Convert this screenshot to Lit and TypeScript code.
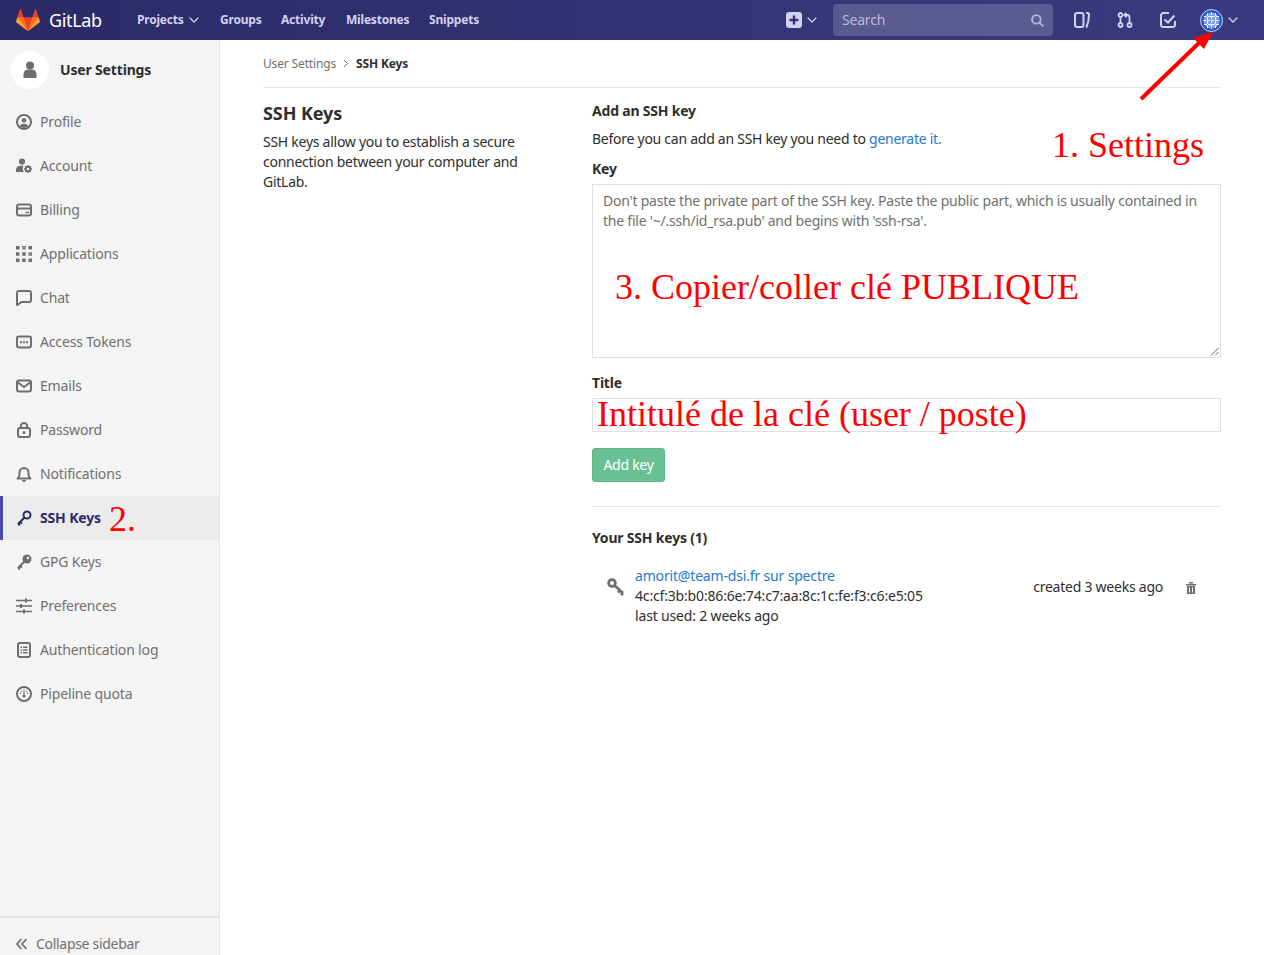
import { LitElement, css, html, svg } from 'lit'
import { customElement } from 'lit/decorators.js'

const chevron = html`<svg class="caret" viewBox="0 0 10 6"><path d="M1 1l4 4 4-4" fill="none" stroke="currentColor" stroke-width="1.2" stroke-linecap="round" stroke-linejoin="round"/></svg>`

const sideIcons: Record<string, unknown> = {
  profile: svg`<circle cx="8" cy="8" r="7" fill="none" stroke="currentColor" stroke-width="2"/><circle cx="8" cy="6.2" r="2.3" fill="currentColor"/><path d="M3.8 12.2c.8-1.7 2.3-2.4 4.2-2.4s3.400.7 4.200 2.400c-1 1-2.600 1.600-4.200 1.600s-3.200-.6-4.200-1.600z" fill="currentColor"/>`,
  account: svg`<circle cx="6" cy="3.6" r="3.1" fill="currentColor"/><path d="M0 14v-2.500C0 9.300 2 7.800 4.500 7.800h3c-1 1.700-1 4.300.4 6.200z" fill="currentColor"/><circle cx="12" cy="11" r="2.300" fill="none" stroke="currentColor" stroke-width="2"/><path d="M12 7v1.200M12 13.800V15M8 11h1.200M14.800 11H16M9.200 8.200l.8.800M14 13l.8.800M14.800 8.200l-.8.800M10 13l-.8.800" stroke="currentColor" stroke-width="1.500"/>`,
  billing: svg`<rect x="1" y="2.500" width="14" height="11" rx="2" fill="none" stroke="currentColor" stroke-width="2"/><path d="M1 5.500h14v2H1z" fill="currentColor"/><path d="M9.500 10.500h3.500" stroke="currentColor" stroke-width="1.500"/>`,
  applications: svg`<path d="M0 0h3.500v3.500H0zM12.500 0H16v3.500h-3.500zM0 6.200h3.500v3.500H0zM6.200 6.200h3.500v3.500H6.200zM0 12.500h3.500V16H0zM6.200 12.500h3.500V16H6.200zM12.500 12.500H16V16h-3.500z" fill="currentColor"/><path d="M6.800.6h2.400V3H6.800zM13.100 6.800h2.400v2.400h-2.400z" fill="none" stroke="currentColor" stroke-width="1.200"/>`,
  chat: svg`<path d="M3 1h10a2 2 0 0 1 2 2v7a2 2 0 0 1-2 2H5.500L1.500 15 1 15V3a2 2 0 0 1 2-2z" fill="none" stroke="currentColor" stroke-width="2" stroke-linejoin="round"/>`,
  tokens: svg`<rect x="1" y="2.500" width="14" height="11" rx="2" fill="none" stroke="currentColor" stroke-width="2"/><path d="M4 7.200h2v2H4zM7 7.200h2v2H7zM10 7.200h2v2h-2z" fill="currentColor"/>`,
  emails: svg`<rect x="1" y="2.500" width="14" height="11" rx="2" fill="none" stroke="currentColor" stroke-width="2"/><path d="M2 4.500l6 4.500 6-4.500" fill="none" stroke="currentColor" stroke-width="2"/>`,
  password: svg`<rect x="2" y="6" width="12" height="9" rx="2" fill="none" stroke="currentColor" stroke-width="2"/><path d="M4.800 6V4.200a3.200 3.200 0 0 1 6.400 0V6" fill="none" stroke="currentColor" stroke-width="2"/><circle cx="8" cy="10.500" r="1.500" fill="currentColor"/>`,
  bell: svg`<path d="M1.500 12.500c1.300-1 2-2 2-3.500V6.500a4.500 4.500 0 0 1 9 0V9c0 1.500.7 2.500 2 3.500z" fill="none" stroke="currentColor" stroke-width="2" stroke-linejoin="round"/><path d="M6 14a2 2 0 0 0 4 0z" fill="currentColor"/><path d="M7 1h2v2H7z" fill="currentColor"/>`,
  key: svg`<circle cx="11" cy="5" r="3.500" fill="none" stroke="currentColor" stroke-width="2"/><path d="M8.500 7.500L2 14M2 14l2 1M4 11.800l2 2" fill="none" stroke="currentColor" stroke-width="2"/>`,
  gpg: svg`<circle cx="11" cy="5" r="4.500" fill="currentColor"/><circle cx="12" cy="4" r="1.200" fill="#f4f4f4"/><path d="M8.500 7.500L2 14M2 14l2 1M4 11.800l2 2" fill="none" stroke="currentColor" stroke-width="2"/>`,
  preferences: svg`<path d="M0 2.500h16M0 8h16M0 13.500h16" stroke="currentColor" stroke-width="1.500"/><path d="M9 .5h2v4H9zM4 6h2v4H4zM7 11.500h2v4H7z" fill="currentColor"/>`,
  log: svg`<rect x="2" y="1" width="12" height="14" rx="2" fill="none" stroke="currentColor" stroke-width="2"/><path d="M4.500 4.500h1.500V6H4.500zM7 4.500h4.500V6H7zM4.500 7.300h1.500v1.500H4.500zM7 7.300h4.500v1.500H7zM4.500 10h1.500v1.500H4.500zM7 10h4.500v1.500H7z" fill="currentColor"/>`,
  quota: svg`<circle cx="8" cy="8" r="7" fill="none" stroke="currentColor" stroke-width="2"/><circle cx="8" cy="10" r="1.600" fill="currentColor"/><path d="M8 9V5.500" stroke="currentColor" stroke-width="1.200"/><path d="M8 3.200v1.300M3.800 7.500h1.300M10.900 7.500h1.300M5 5l.9.900M11 5l-.9.900" stroke="currentColor" stroke-width="1.200"/>`,
}

const menu = [
  ['profile', 'Profile'],
  ['account', 'Account'],
  ['billing', 'Billing'],
  ['applications', 'Applications'],
  ['chat', 'Chat'],
  ['tokens', 'Access Tokens'],
  ['emails', 'Emails'],
  ['password', 'Password'],
  ['bell', 'Notifications'],
  ['key', 'SSH Keys'],
  ['gpg', 'GPG Keys'],
  ['preferences', 'Preferences'],
  ['log', 'Authentication log'],
  ['quota', 'Pipeline quota'],
]

@customElement('app-root')
export class AppRoot extends LitElement {
  static styles = css`
    :host {
      display: block;
      position: relative;
      height: 955px;
      overflow: hidden;
      font-family: 'Noto Sans', sans-serif;
      font-size: 14px;
      line-height: 20px;
      color: #2e2e2e;
      background: #fff;
    }

    * {
      box-sizing: border-box;
    }

    .navbar {
      display: flex;
      align-items: center;
      height: 40px;
      padding-left: 16px;
      background: linear-gradient(90deg, #2b2a66, #3b3a80);
      color: #d1d1f0;
    }

    .brand {
      display: flex;
      align-items: center;
      gap: 9px;
      width: 121px;
      color: #fff;
      font-size: 18px;
      letter-spacing: -0.35px;
    }

    .brand svg {
      width: 24px;
      height: 24px;
    }

    .links {
      display: flex;
      width: 649px;
      font-size: 12px;
      font-weight: 700;
      letter-spacing: -0.2px;
    }

    .links span {
      display: flex;
      align-items: center;
      gap: 5px;
    }

    .links span:nth-child(1) {
      width: 83px;
    }
    .links span:nth-child(2) {
      width: 61px;
    }
    .links span:nth-child(3) {
      width: 65px;
    }
    .links span:nth-child(4) {
      width: 83px;
    }

    .caret {
      width: 10px;
      height: 6px;
      flex: none;
    }

    .new {
      display: flex;
      align-items: center;
      gap: 5px;
      width: 47px;
    }

    .new svg:first-child {
      width: 16px;
      height: 16px;
    }

    .search {
      display: flex;
      align-items: center;
      justify-content: space-between;
      width: 220px;
      height: 32px;
      padding: 0 9px;
      border-radius: 4px;
      background: rgba(255, 255, 255, 0.18);
      color: #b9b9dc;
      letter-spacing: -0.2px;
    }

    .search svg {
      width: 13px;
      height: 13px;
    }

    .tools {
      display: flex;
      align-items: center;
      margin-left: 21px;
    }

    .tools .tool {
      width: 16px;
      height: 16px;
      margin-right: 27px;
    }

    .avatar {
      width: 23px;
      height: 23px;
      margin: 0 5px 0 -3px;
    }

    .layout {
      display: flex;
      height: 915px;
    }

    .sidebar {
      display: flex;
      flex-direction: column;
      width: 220px;
      flex: none;
      background: #f4f4f4;
      border-right: 1px solid #e5e5e5;
      color: #707070;
      letter-spacing: -0.16px;
    }

    .context {
      display: flex;
      align-items: center;
      gap: 11px;
      height: 60px;
      padding-left: 11px;
      font-weight: 700;
      color: #2e2e2e;
    }

    .context i {
      display: flex;
      align-items: center;
      justify-content: center;
      width: 38px;
      height: 38px;
      border-radius: 50%;
      background: #fff;
      color: #6e6e6e;
    }

    .context svg {
      width: 16px;
      height: 18px;
    }

    .items {
      flex: 1;
    }

    .item {
      display: flex;
      align-items: center;
      gap: 8px;
      height: 44px;
      padding-left: 16px;
    }

    .item svg {
      width: 16px;
      height: 16px;
      flex: none;
      color: #6e6e6e;
    }

    .item.active {
      padding-left: 13px;
      border-left: 3px solid #4b4ba3;
      background: #ebebeb;
      color: #2d2b69;
      font-weight: 700;
    }

    .item.active svg {
      color: #2d2b69;
    }

    .step {
      margin: 2px 0 0 0;
      font: 36px/1 'Liberation Serif', serif;
      letter-spacing: 0;
      color: #f00;
    }

    .collapse {
      display: flex;
      align-items: center;
      gap: 8px;
      height: 39px;
      padding: 14px 0 0 16px;
      border-top: 2px solid #e5e5e5;
      letter-spacing: -0.3px;
    }

    .collapse svg {
      width: 12px;
      height: 12px;
    }

    .content {
      flex: 1;
      padding: 0 43px;
    }

    .crumbs {
      display: flex;
      align-items: center;
      gap: 7px;
      height: 48px;
      border-bottom: 1px solid #e5e5e5;
      font-size: 12px;
      letter-spacing: -0.15px;
      color: #707070;
    }

    .crumbs svg {
      width: 6px;
      height: 9px;
    }

    .crumbs b {
      color: #2e2e2e;
    }

    .row {
      display: grid;
      grid-template-columns: 329px 1fr;
      letter-spacing: -0.26px;
    }

    .intro h4 {
      margin: 13px 0 7px;
      font-size: 18px;
      line-height: 24px;
      font-weight: 700;
      letter-spacing: -0.1px;
    }

    .intro p {
      width: 270px;
      margin: 0;
    }

    .label {
      display: block;
      font-weight: 700;
      letter-spacing: -0.2px;
    }

    .add {
      padding-top: 13px;
    }

    .add p {
      margin: 8px 0 10px;
    }

    a {
      color: #1f78d1;
      text-decoration: none;
    }

    .keybox {
      position: relative;
      height: 174px;
      margin: 5px 0 15px;
      padding: 6px 10px;
      border: 1px solid #dfdfdf;
      color: #707070;
      letter-spacing: -0.225px;
    }

    .keybox .note {
      position: absolute;
      left: 22px;
      top: 80px;
    }

    .note {
      font: 36px/44px 'Liberation Serif', serif;
      letter-spacing: 0;
      color: #f00;
      white-space: nowrap;
    }

    .grip {
      position: absolute;
      right: 1px;
      bottom: 1px;
      width: 9px;
      height: 9px;
    }

    .titlebox {
      height: 34px;
      margin: 5px 0 16px;
      padding-left: 4px;
      border: 1px solid #dfdfdf;
    }

    .titlebox .note {
      line-height: 30px;
    }

    .btn {
      display: flex;
      align-items: center;
      justify-content: center;
      width: 73px;
      height: 34px;
      border: 1px solid #5fb68a;
      border-radius: 3px;
      background: #69c193;
      color: #fff;
    }

    hr {
      height: 1px;
      margin: 24px 0 21px;
      border: 0;
      background: #e5e5e5;
    }

    .keyrow {
      display: flex;
      align-items: flex-start;
      padding: 18px 0 0 15px;
      letter-spacing: -0.17px;
    }

    .keyrow .bigkey {
      width: 18px;
      height: 18px;
      margin: 12px 10px 0 0;
      color: #707070;
    }

    .keyinfo {
      flex: 1;
    }

    .created {
      margin-top: 2px;
      padding-top: 9px;
      letter-spacing: -0.24px;
    }

    .trash {
      width: 12px;
      height: 13px;
      margin: 15px 24px 0 22px;
      color: #707070;
    }

    .settings {
      position: absolute;
      left: 1052px;
      top: 123px;
    }

    .arrow {
      position: absolute;
      left: 1130px;
      top: 25px;
      width: 95px;
      height: 80px;
    }
  `

  render() {
    return html`
      <div class="navbar">
        <div class="brand">
          <svg viewBox="0 0 36 36">
            <path fill="#e24329" d="M2 14l9.38 9v-9l-4-12.28c-.205-.632-1.176-.632-1.38 0z"/>
            <path fill="#e24329" d="M34 14l-9.38 9v-9l4-12.28c.205-.632 1.176-.632 1.38 0z"/>
            <path fill="#e24329" d="M18 34.38L3 14h30z"/>
            <path fill="#fc6d26" d="M18 34.38L11.38 14H2l4 11z"/>
            <path fill="#fc6d26" d="M18 34.38L24.62 14H34l-4 11z"/>
            <path fill="#fca326" d="M2 14L.1 20.16c-.18.565 0 1.2.5 1.56l17.42 12.66z"/>
            <path fill="#fca326" d="M34 14l1.9 6.16c.18.565 0 1.2-.5 1.56L18 34.38z"/>
          </svg>
          GitLab
        </div>
        <div class="links">
          <span>Projects ${chevron}</span>
          <span>Groups</span>
          <span>Activity</span>
          <span>Milestones</span>
          <span>Snippets</span>
        </div>
        <div class="new">
          <svg viewBox="0 0 16 16"><rect width="16" height="16" rx="3" fill="currentColor"/><path d="M8 3.500v9M3.500 8h9" stroke="#33326f" stroke-width="2.400"/></svg>
          ${chevron}
        </div>
        <div class="search">
          Search
          <svg viewBox="0 0 14 14"><circle cx="5.800" cy="5.800" r="4.600" fill="none" stroke="currentColor" stroke-width="2"/><path d="M9.300 9.300l4 4" stroke="currentColor" stroke-width="2"/></svg>
        </div>
        <div class="tools">
          <svg class="tool" viewBox="0 0 16 16"><rect x="1" y="1" width="8.500" height="14" rx="2" fill="none" stroke="currentColor" stroke-width="2"/><path d="M12 1h1.500A1.500 1.500 0 0 1 15 2.500c0 4-.5 8-2.500 12.500H12" fill="none" stroke="currentColor" stroke-width="2"/></svg>
          <svg class="tool" viewBox="0 0 16 16"><circle cx="3.500" cy="3" r="2" fill="none" stroke="currentColor" stroke-width="1.800"/><circle cx="3.500" cy="13" r="2" fill="none" stroke="currentColor" stroke-width="1.800"/><circle cx="12.500" cy="13" r="2" fill="none" stroke="currentColor" stroke-width="1.800"/><path d="M3.500 5v6M12.500 11V5.500c0-1.500-.8-2.500-2.500-2.500H8M9.500 .8L7.300 3l2.200 2.200" fill="none" stroke="currentColor" stroke-width="1.800"/></svg>
          <svg class="tool" viewBox="0 0 16 16"><path d="M15 9v3.500a2.500 2.500 0 0 1-2.500 2.500h-9A2.500 2.500 0 0 1 1 12.500v-9A2.500 2.500 0 0 1 3.500 1H9" fill="none" stroke="currentColor" stroke-width="2"/><path d="M4.500 7.500L8 10.500 14.500 3.500" fill="none" stroke="currentColor" stroke-width="2"/></svg>
          <svg class="avatar" viewBox="0 0 23 23">
            <circle cx="11.500" cy="11.500" r="11" fill="#2456c8" stroke="#c9d6f5" stroke-width="1"/>
            <circle cx="11.500" cy="11.500" r="8" fill="#7f9fe8"/>
            <path d="M4 7.500h15M3 11.500h17M4 15.500h15M7.500 4v15M11.500 3v17M15.500 4v15" stroke="#f2f5ff" stroke-width="1" stroke-dasharray="3 1"/>
          </svg>
          ${chevron}
        </div>
      </div>

      <div class="layout">
        <aside class="sidebar">
          <div class="context">
            <i><svg viewBox="0 0 16 18"><circle cx="8" cy="4.500" r="4" fill="currentColor"/><path d="M1.500 17v-4c0-2.500 2-4.500 4.500-4.500h4c2.500 0 4.500 2 4.500 4.500v4z" fill="currentColor"/></svg></i>
            User Settings
          </div>
          <div class="items">
            ${menu.map(
              ([icon, label]) => html`
                <div class="item ${label === 'SSH Keys' ? 'active' : ''}">
                  <svg viewBox="0 0 16 16">${sideIcons[icon]}</svg>
                  ${label}
                  ${label === 'SSH Keys' ? html`<span class="step">2.</span>` : ''}
                </div>
              `,
            )}
          </div>
          <div class="collapse">
            <svg viewBox="0 0 12 12"><path d="M5.500 1L1 6l4.500 5M10.500 1L6 6l4.500 5" fill="none" stroke="currentColor" stroke-width="1.800"/></svg>
            Collapse sidebar
          </div>
        </aside>

        <main class="content">
          <div class="crumbs">
            User Settings
            <svg viewBox="0 0 6 9"><path d="M1 1l3.500 3.500L1 8" fill="none" stroke="currentColor"/></svg>
            <b>SSH Keys</b>
          </div>
          <div class="row">
            <div class="intro">
              <h4>SSH Keys</h4>
              <p>SSH keys allow you to establish a secure connection between your computer and GitLab.</p>
            </div>
            <div class="add">
              <span class="label">Add an SSH key</span>
              <p>Before you can add an SSH key you need to <a>generate it.</a></p>
              <span class="label">Key</span>
              <div class="keybox">
                Don't paste the private part of the SSH key. Paste the public part, which is usually contained in the file '~/.ssh/id_rsa.pub' and begins with 'ssh-rsa'.
                <div class="note">3. Copier/coller clé PUBLIQUE</div>
                <svg class="grip" viewBox="0 0 9 9"><path d="M8.500 1L1 8.500M8.500 5L5 8.500" stroke="#707070" fill="none"/></svg>
              </div>
              <span class="label">Title</span>
              <div class="titlebox"><div class="note">Intitulé de la clé (user / poste)</div></div>
              <div class="btn">Add key</div>
              <hr />
              <span class="label">Your SSH keys (1)</span>
              <div class="keyrow">
                <svg class="bigkey" viewBox="0 0 18 18"><circle cx="5" cy="5" r="3.400" fill="none" stroke="currentColor" stroke-width="2.800"/><path d="M7.500 7.500L16 15M13 12.500l-2 2M16 15l-2 2" fill="none" stroke="currentColor" stroke-width="2.800"/></svg>
                <div class="keyinfo">
                  <a>amorit@team-dsi.fr sur spectre</a><br />
                  4c:cf:3b:b0:86:6e:74:c7:aa:8c:1c:fe:f3:c6:e5:05<br />
                  last used: 2 weeks ago
                </div>
                <span class="created">created 3 weeks ago</span>
                <svg class="trash" viewBox="0 0 12 13"><path d="M1 3h10v1.500H1zM4 1h4v1.500H4zM2 5h8v8H2z" fill="currentColor"/><path d="M4.500 6.500v5M7.500 6.500v5" stroke="#fff"/></svg>
              </div>
            </div>
          </div>
        </main>
      </div>

      <div class="note settings">1. Settings</div>
      <svg class="arrow" viewBox="0 0 95 80">
        <path d="M11 74L70 17" stroke="#f00" stroke-width="4" fill="none"/>
        <path d="M83 7L63 13 74 24z" fill="#f00"/>
      </svg>
    `
  }
}
